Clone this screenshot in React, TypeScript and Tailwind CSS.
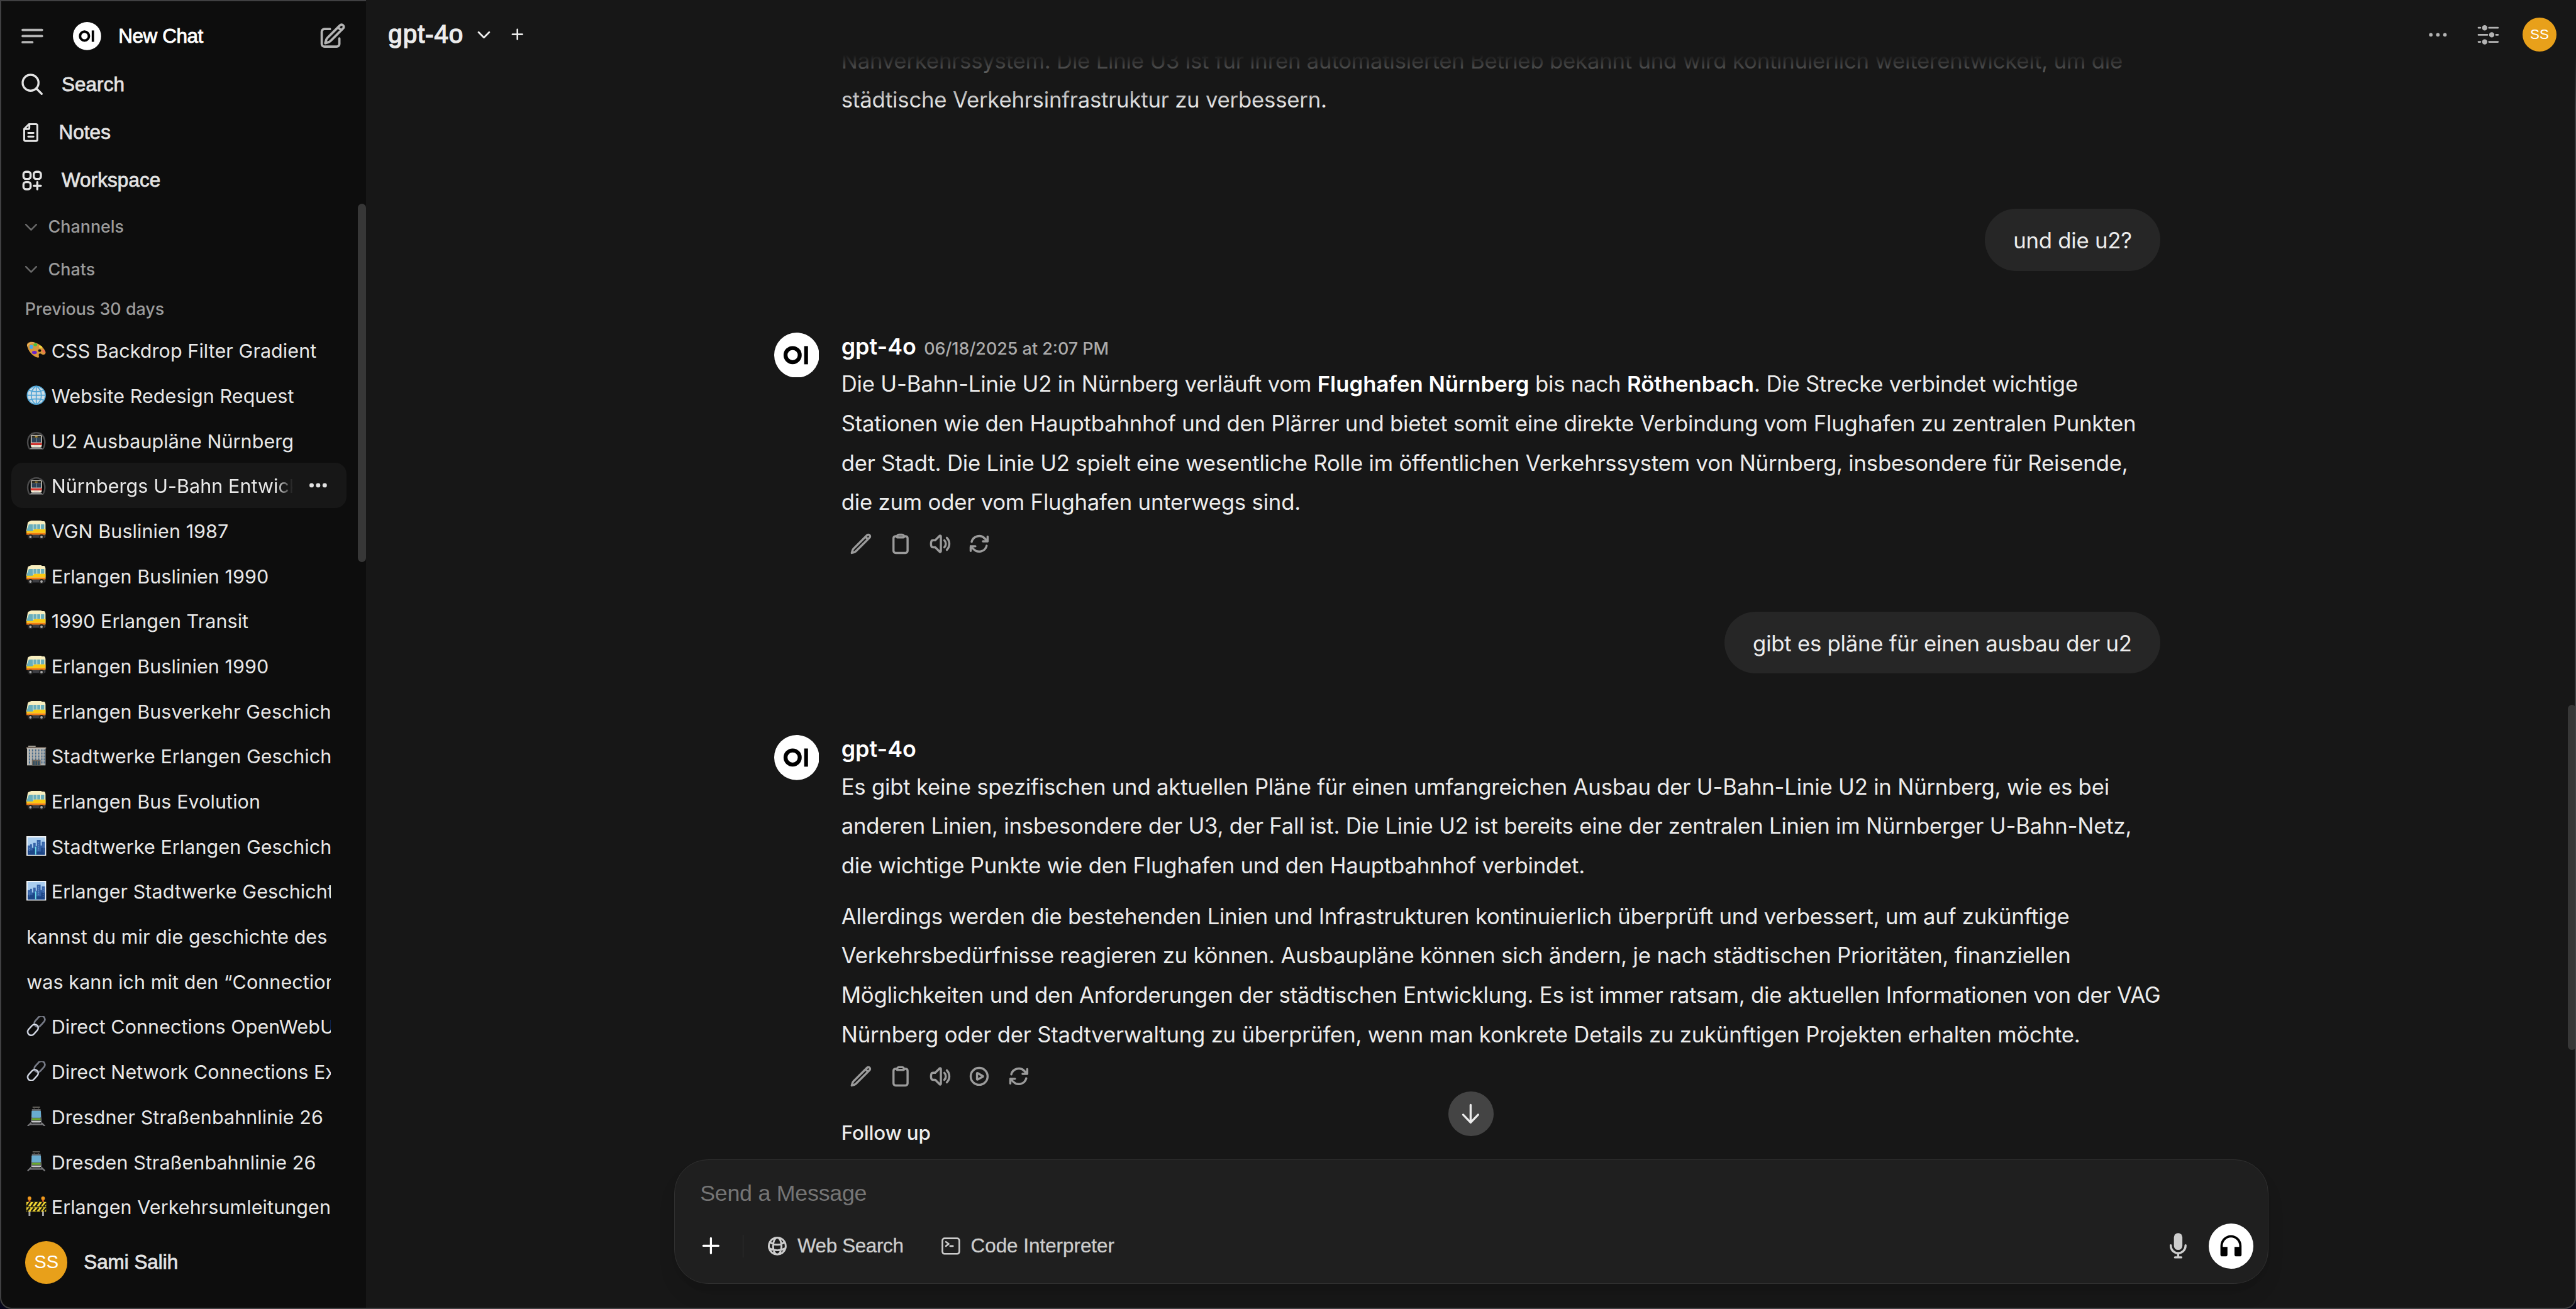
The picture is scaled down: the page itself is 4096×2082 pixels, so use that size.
import type { ReactNode } from 'react';
import clsx from 'clsx';

const GROTESK = "font-['Liberation_Sans',Arial,sans-serif]";

interface IconProps {
  d: string | string[];
  className?: string;
  strokeWidth?: number;
}

function Icon({ d, className = 'size-4', strokeWidth = 2 }: IconProps) {
  const paths = Array.isArray(d) ? d : [d];
  return (
    <svg
      viewBox="0 0 24 24"
      fill="none"
      stroke="currentColor"
      strokeWidth={strokeWidth}
      strokeLinecap="round"
      strokeLinejoin="round"
      className={clsx('shrink-0', className)}
    >
      {paths.map((p) => (
        <path key={p} d={p} />
      ))}
    </svg>
  );
}

const icons = {
  menu: 'M3.75 6.75h16.5M3.75 12h16.5m-16.5 5.25H12',
  edit: 'm16.862 4.487 1.687-1.688a1.875 1.875 0 1 1 2.652 2.652L10.582 16.07a4.5 4.5 0 0 1-1.897 1.13L6 18l.8-2.685a4.5 4.5 0 0 1 1.13-1.897l8.932-8.931Zm0 0L19.5 7.125M18 14v4.75A2.25 2.25 0 0 1 15.75 21H5.25A2.25 2.25 0 0 1 3 18.75V8.25A2.25 2.25 0 0 1 5.25 6H10',
  search: 'm21 21-5.197-5.197m0 0A7.5 7.5 0 1 0 5.196 5.196a7.5 7.5 0 0 0 10.607 10.607Z',
  notes: [
    'M10 3h7.5A1.5 1.5 0 0 1 19 4.5v15a1.5 1.5 0 0 1-1.5 1.5h-11A1.5 1.5 0 0 1 5 19.5V8Z',
    'M10.5 3.5V7a1.2 1.2 0 0 1-1.2 1.2H5.5',
    'M9.3 12.4h5.6M9.3 16.2h5.6',
  ],
  workspace:
    'M13.5 16.875h3.375m0 0h3.375m-3.375 0V13.5m0 3.375v3.375M6 10.5h2.25a2.25 2.25 0 0 0 2.25-2.25V6a2.25 2.25 0 0 0-2.25-2.25H6A2.25 2.25 0 0 0 3.75 6v2.25A2.25 2.25 0 0 0 6 10.5Zm0 9.75h2.25A2.25 2.25 0 0 0 10.5 18v-2.25a2.25 2.25 0 0 0-2.25-2.25H6a2.25 2.25 0 0 0-2.25 2.25V18A2.25 2.25 0 0 0 6 20.25Zm9.75-9.75H18a2.25 2.25 0 0 0 2.25-2.25V6A2.25 2.25 0 0 0 18 3.75h-2.25A2.25 2.25 0 0 0 13.5 6v2.25a2.25 2.25 0 0 0 2.25 2.25Z',
  chevron: 'm19.5 8.25-7.5 7.5-7.5-7.5',
  plus: 'M12 6v12m6-6H6',
  pencil:
    'M16.862 4.487l1.687-1.688a1.875 1.875 0 112.652 2.652L6.832 19.82a4.5 4.5 0 01-1.897 1.13l-2.685.8.8-2.685a4.5 4.5 0 011.13-1.897L16.863 4.487zm0 0L19.5 7.125',
  clipboard:
    'M15.666 3.888A2.25 2.25 0 0013.5 2.25h-3c-1.03 0-1.9.693-2.166 1.638m7.332 0c.055.194.084.4.084.612v0a.75.75 0 01-.75.75H9a.75.75 0 01-.75-.75v0c0-.212.03-.418.084-.612m7.332 0c.646.049 1.288.11 1.927.184 1.1.128 1.907 1.077 1.907 2.185V19.5a2.25 2.25 0 01-2.25 2.25H6.75A2.25 2.25 0 014.5 19.5V6.257c0-1.108.806-2.057 1.907-2.185a48.208 48.208 0 011.927-.184',
  speaker:
    'M19.114 5.636a9 9 0 010 12.728M16.463 8.288a5.25 5.25 0 010 7.424M6.75 8.25l4.72-4.72a.75.75 0 011.28.53v15.88a.75.75 0 01-1.28.53l-4.72-4.72H4.51c-.88 0-1.704-.507-1.938-1.354A9.01 9.01 0 012.25 12c0-.83.112-1.633.322-2.396C2.806 8.756 3.63 8.25 4.51 8.25H6.75z',
  play: [
    'M21 12a9 9 0 1 1-18 0 9 9 0 0 1 18 0Z',
    'M15.91 11.672a.375.375 0 0 1 0 .656l-5.603 3.113a.375.375 0 0 1-.557-.328V8.887c0-.286.307-.466.557-.327l5.603 3.112Z',
  ],
  refresh:
    'M16.023 9.348h4.992v-.001M2.985 19.644v-4.992m0 0h4.992m-4.993 0l3.181 3.183a8.25 8.25 0 0013.803-3.7M4.031 9.865a8.25 8.25 0 0113.803-3.7l3.181 3.182m0-4.991v4.99',
  globe:
    'M12 21a9.004 9.004 0 0 0 8.716-6.747M12 21a9.004 9.004 0 0 1-8.716-6.747M12 21c2.485 0 4.5-4.03 4.5-9S14.485 3 12 3m0 18c-2.485 0-4.5-4.03-4.5-9S9.515 3 12 3m0 0a8.997 8.997 0 0 1 7.843 4.582M12 3a8.997 8.997 0 0 0-7.843 4.582m15.686 0A11.953 11.953 0 0 1 12 10.5c-2.998 0-5.74-1.1-7.843-2.918m15.686 0A8.959 8.959 0 0 1 21 12c0 .778-.099 1.533-.284 2.253m0 0A17.919 17.919 0 0 1 12 16.5c-3.162 0-6.133-.815-8.716-2.247m0 0A9.015 9.015 0 0 1 3 12c0-1.605.42-3.113 1.157-4.418',
  code: 'm6.75 7.5 3 2.25-3 2.25m4.5 0h3m-9 8.25h13.5A2.25 2.25 0 0 0 21 18V6a2.25 2.25 0 0 0-2.25-2.25H5.25A2.25 2.25 0 0 0 3 6v12a2.25 2.25 0 0 0 2.25 2.25Z',
};

function Logo({ className }: { className: string }) {
  return (
    <svg viewBox="0 0 32 32" className={clsx('shrink-0', className)}>
      <circle cx="16" cy="16" r="16" fill="#fff" />
      <circle cx="13.1" cy="16" r="5.05" fill="none" stroke="#000" strokeWidth="2.8" />
      <rect x="21.3" y="9.6" width="2.7" height="12.9" fill="#000" />
    </svg>
  );
}

type EmojiName = 'palette' | 'globe' | 'metro' | 'bus' | 'office' | 'city' | 'link' | 'tram' | 'barrier';

const emojis: Record<EmojiName, ReactNode> = {
  palette: (
    <>
      <path d="M1 9C0 4 7 1 14 4c8 2 15 9 17 15 1 4-3 6-6 4-2-2-5-2-5 1 0 2 1 3 0 4-3 1-9-2-13-7C4 18 2 13 1 9Z" fill="#d8963a" />
      <path d="M2 10C2 6 8 3 14 5" stroke="#f0bd68" strokeWidth="1.4" fill="none" />
      <ellipse cx="21.5" cy="17" rx="2.4" ry="2.2" fill="#151008" />
      <ellipse cx="8" cy="11" rx="3" ry="3.4" fill="#4aa8e8" />
      <ellipse cx="14.5" cy="7.5" rx="3" ry="2.4" fill="#4cbf3c" />
      <ellipse cx="23" cy="11" rx="3" ry="2" fill="#f2d53c" transform="rotate(30 23 11)" />
      <ellipse cx="28" cy="18" rx="2.8" ry="1.8" fill="#ef6a50" transform="rotate(50 28 18)" />
      <ellipse cx="13" cy="20" rx="4" ry="2.6" fill="#6a24c8" />
    </>
  ),
  globe: (
    <>
      <circle cx="16" cy="16" r="15.5" fill="#56a9d8" />
      <circle cx="16" cy="16" r="13.8" fill="#cfdfe8" />
      <path
        d="M16 1v30M1 16h30M4 8c7 3 17 3 24 0M4 24c7-3 17-3 24 0M16 1C5 8 5 24 16 31M16 1c11 7 11 23 0 30"
        fill="none"
        stroke="#4fa4d6"
        strokeWidth="1.7"
      />
    </>
  ),
  metro: (
    <>
      <path d="M4 31C-3 19 2 3 16 3s19 16 12 28Z" fill="#4a4a4b" />
      <path d="M6.500 31C0 20 4 5.500 16 5.500S32 20 25.500 31Z" fill="#070707" />
      <path d="M5 31l3-3h16l3 3Z" fill="#8d8d8d" />
      <rect x="7" y="8" width="18" height="20" rx="2.5" fill="#e5e0d4" />
      <rect x="8.5" y="9" width="15" height="4" fill="#2b2a22" />
      <path d="M14 11h4" stroke="#e5b83c" strokeWidth="1.4" />
      <rect x="8.500" y="13" width="15" height="7" fill="#2c4054" />
      <path d="M16 13v7" stroke="#8ea3b5" />
      <rect x="7" y="21" width="18" height="3.5" fill="#d13430" />
      <path d="M9 26h3M20 26h3" stroke="#fff6c8" strokeWidth="1.8" />
    </>
  ),
  bus: (
    <>
      <rect x="2" y="22" width="29" height="6" rx="1.5" fill="#3c3d42" />
      <path d="M3 2 8 0h16l1 1h4q2 1 2 4v17H0v-6L2 4Z" fill="#f8efbf" />
      <path d="M4 6h25v8H12l-2 4H1v-4Z" fill="#69aebb" />
      <path d="M11 6v9M17 6v8M23 6v8" stroke="#e6f0dc" strokeWidth="1.1" />
      <path d="M0 17h10l3-3h18v6H0Z" fill="#fac912" />
      <path d="M0 20h31v3H0Z" fill="#f07b12" />
      <circle cx="6.5" cy="26.5" r="4" fill="#222" />
      <circle cx="6.5" cy="26.5" r="2" fill="#aaa" />
      <circle cx="24.5" cy="26.5" r="4" fill="#222" />
      <circle cx="24.5" cy="26.5" r="2" fill="#aaa" />
    </>
  ),
  office: (
    <>
      <rect x="3" y="0" width="12" height="4" fill="#a29d92" />
      <rect x="0" y="2" width="32" height="3" fill="#6b6058" />
      <rect x="1" y="4" width="30" height="28" fill="#b7b6b1" />
      <path d="M5 6v25M10 6v25M15 6v25M20 6v25M25 6v25M29 6v25" stroke="#46698a" strokeWidth="2" strokeDasharray="3.4 1.5" />
      <rect x="9" y="23" width="14" height="9" fill="#6f675d" />
      <path d="M12 25v7M16 25v7M20 25v7" stroke="#2c4d63" strokeWidth="2.4" />
    </>
  ),
  city: (
    <>
      <rect width="32" height="32" fill="#f1f4f6" />
      <rect x="2" y="2" width="28" height="28" fill="#a9cdf0" />
      <path d="M2 15h4v-2h3v6h2v-8h4v5h2V6h6v9h2V9h5v21H2Z" fill="#3563a8" />
      <path d="M2 23h8v-3h6v5h8v-6h6v11H2Z" fill="#1c4586" />
      <path d="M15 17v13" stroke="#6fe0ec" strokeWidth="1.8" />
      <path d="M5 19v7M20 9v14M27 12v14" stroke="#86a9dc" strokeDasharray="1.6 1.6" />
    </>
  ),
  link: (
    <>
      <rect x="12" y="3.2" width="20" height="11.4" rx="5.7" fill="none" stroke="#767a86" strokeWidth="2.8" transform="rotate(-48 21.5 9.5)" />
      <rect x="0.6" y="16.8" width="20" height="11.4" rx="5.7" fill="none" stroke="#9fa6b6" strokeWidth="2.8" transform="rotate(-48 10.5 22.5)" />
      <rect x="0.6" y="16.8" width="20" height="11.4" rx="5.7" fill="none" stroke="#eef1f7" strokeWidth="1.1" transform="rotate(-48 10.5 22.5)" />
    </>
  ),
  tram: (
    <>
      <path d="M10 1h12M12 3.5l2 2h4l2-2" stroke="#77746e" strokeWidth="1.4" fill="none" />
      <path d="M8 26 2 32M24 26l6 6M5 29h22" stroke="#77777a" strokeWidth="2.4" />
      <path d="M9 4h14l2 19-3 4H10l-3-4Z" fill="#5f6062" />
      <rect x="8.5" y="7" width="15" height="11" rx="1.5" fill="#69acd0" />
      <path d="M9 19h14v3H9Z" fill="#69a92e" />
      <path d="M8 24.5h16" stroke="#c9c9cb" strokeWidth="2" />
    </>
  ),
  barrier: (
    <>
      <path d="M5 20v12M27 20v12" stroke="#a4a4a6" strokeWidth="3" />
      <circle cx="5" cy="3" r="3" fill="#f09a1d" />
      <circle cx="27" cy="3" r="3" fill="#f09a1d" />
      <path d="M3.5 5h3v4h-3ZM25.5 5h3v4h-3Z" fill="#d4571c" />
      <path d="M0 9h32v7H0ZM0 17.5h32v7H0Z" fill="#f0d632" />
      <path
        d="M1 16 6 9M8 16l5-7M15 16l5-7M22 16l5-7M28 16l4-5M1 24l5-6M8 24l5-6M15 24l5-6M22 24l5-6M28 24l4-5"
        stroke="#1d1b12"
        strokeWidth="2.6"
      />
    </>
  ),
};

function Emoji({ name }: { name: EmojiName }) {
  return (
    <svg viewBox="0 0 32 32" className="mr-[3.6px] size-3.5 shrink-0">
      {emojis[name]}
    </svg>
  );
}

const chats: { emoji?: EmojiName; title: string; active?: boolean }[] = [
  { emoji: 'palette', title: 'CSS Backdrop Filter Gradient' },
  { emoji: 'globe', title: 'Website Redesign Request' },
  { emoji: 'metro', title: 'U2 Ausbaupläne Nürnberg' },
  { emoji: 'metro', title: 'Nürnbergs U-Bahn Entwicklung', active: true },
  { emoji: 'bus', title: 'VGN Buslinien 1987' },
  { emoji: 'bus', title: 'Erlangen Buslinien 1990' },
  { emoji: 'bus', title: '1990 Erlangen Transit' },
  { emoji: 'bus', title: 'Erlangen Buslinien 1990' },
  { emoji: 'bus', title: 'Erlangen Busverkehr Geschichte' },
  { emoji: 'office', title: 'Stadtwerke Erlangen Geschichte' },
  { emoji: 'bus', title: 'Erlangen Bus Evolution' },
  { emoji: 'city', title: 'Stadtwerke Erlangen Geschichte' },
  { emoji: 'city', title: 'Erlanger Stadtwerke Geschichte' },
  { title: 'kannst du mir die geschichte des' },
  { title: 'was kann ich mit den “Connections”' },
  { emoji: 'link', title: 'Direct Connections OpenWebUI' },
  { emoji: 'link', title: 'Direct Network Connections Explained' },
  { emoji: 'tram', title: 'Dresdner Straßenbahnlinie 26' },
  { emoji: 'tram', title: 'Dresden Straßenbahnlinie 26' },
  { emoji: 'barrier', title: 'Erlangen Verkehrsumleitungen' },
];

function Sidebar() {
  const navText = clsx(GROTESK, 'text-sm leading-5 text-[#e3e3e3] [-webkit-text-stroke:0.35px]');
  return (
    <aside className="relative flex h-full w-[260px] shrink-0 flex-col bg-[#0d0d0d]">
      <div className="flex h-[43px] items-center pt-[8.3px] pr-[14.1px] pl-[12.9px] text-[#b4b4b4]">
        <Icon d={icons.menu} className="size-5" />
        <Logo className="ml-[18.9px] size-5" />
        <span className={clsx(GROTESK, 'ml-[12.2px] flex-1 pt-[0.6px] text-sm leading-5 tracking-[-0.16px] text-white [-webkit-text-stroke:0.4px]')}>
          New Chat
        </span>
        <Icon d={icons.edit} className="size-5" />
      </div>
      {[
        { label: 'Search', icon: icons.search, size: 'size-[18px]' },
        { label: 'Notes', icon: icons.notes, size: 'size-4' },
        { label: 'Workspace', icon: icons.workspace, size: 'size-[18px]' },
      ].map((item) => (
        <div key={item.label} className="flex h-[34px] items-center gap-[12px] pl-[13.7px] text-[#e3e3e3]">
          <Icon d={item.icon} className={item.size} />
          <span className={clsx(navText, 'pt-[0.6px] tracking-[0.06px]')}>{item.label}</span>
        </div>
      ))}
      <div className="pt-[1.3px]">
        {['Channels', 'Chats'].map((label) => (
          <div key={label} className="flex h-[30px] items-center gap-[6.2px] pl-4">
            <Icon d={icons.chevron} strokeWidth={2.2} className="size-3 text-[#6b6b6b]" />
            <span className="text-xs font-medium text-[#9b9b9b]">{label}</span>
          </div>
        ))}
      </div>
      <div className="flex h-[26.3px] items-center pl-[17.8px] text-xs font-medium text-[#9b9b9b]">Previous 30 days</div>
      <div className="flex flex-col pr-3.5 pl-2">
        {chats.map((chat, i) => (
          <div
            key={i}
            className={clsx(
              'flex h-8 items-center rounded-lg pl-[10.9px]',
              chat.active ? 'bg-[#171717] pr-[14px]' : 'pr-[11px]',
            )}
          >
            {chat.emoji && <Emoji name={chat.emoji} />}
            <span
              className={clsx(
                'h-[22px] flex-1 overflow-hidden pt-px text-[13.6px] leading-[21.4px] tracking-[0.04px] whitespace-nowrap text-[#e8e8e8]',
                chat.active && 'mr-[11.5px] [mask-image:linear-gradient(to_right,black_93%,transparent)]',
              )}
            >
              {chat.title}
            </span>
            {chat.active && (
              <svg viewBox="0 0 16 16" className="size-[12.4px] shrink-0 overflow-visible text-[#e3e3e3]" fill="currentColor">
                <circle cx="2" cy="8" r="2" />
                <circle cx="8" cy="8" r="2" />
                <circle cx="14" cy="8" r="2" />
              </svg>
            )}
          </div>
        ))}
      </div>
      <div className="flex items-center gap-[11.6px] pt-[8.9px] pl-[17.9px]">
        <div className={clsx(GROTESK, 'flex size-[30px] items-center justify-center rounded-full bg-[#e8a01a] text-[13px] text-white')}>
          SS
        </div>
        <span className={clsx(navText, 'pt-[0.6px]')}>Sami Salih</span>
      </div>
      <div className="absolute top-[144.6px] right-0 h-[254.7px] w-1.5 rounded-full bg-[#373737]" />
    </aside>
  );
}

function Header() {
  return (
    <header className="absolute inset-x-0 top-0 z-10 flex h-[78px] items-start bg-linear-to-b from-[#171717] via-[#171717] via-50% to-transparent to-97% pt-[8.6px]">
      <div className="flex h-8 flex-1 items-center pl-[15.6px] text-[#ececec]">
        <span className={clsx(GROTESK, 'text-lg leading-8 tracking-[0.4px] [-webkit-text-stroke:0.65px]')}>gpt-4o</span>
        <Icon d={icons.chevron} strokeWidth={2.5} className="ml-[8.6px] size-3" />
        <Icon d={icons.plus} className="ml-[10.6px] size-3.5" />
      </div>
      <div className="flex h-8 items-center pr-[13.9px] text-[#b4b4b4]">
        <svg viewBox="0 0 24 24" fill="currentColor" className="size-5">
          <circle cx="6" cy="12" r="1.5" />
          <circle cx="12" cy="12" r="1.5" />
          <circle cx="18" cy="12" r="1.5" />
        </svg>
        <svg viewBox="0 0 24 24" fill="currentColor" className="ml-[15.7px] size-5">
          <path d="M18.75 12.75h1.5a.75.75 0 0 0 0-1.5h-1.5a.75.75 0 0 0 0 1.5ZM12 6a.75.75 0 0 1 .75-.75h7.5a.75.75 0 0 1 0 1.5h-7.5A.75.75 0 0 1 12 6ZM12 18a.75.75 0 0 1 .75-.75h7.5a.75.75 0 0 1 0 1.5h-7.5A.75.75 0 0 1 12 18ZM3.75 6.75h1.5a.75.75 0 1 0 0-1.5h-1.5a.75.75 0 0 0 0 1.5ZM5.25 18.75h-1.5a.75.75 0 0 1 0-1.5h1.5a.75.75 0 0 1 0 1.5ZM3 12a.75.75 0 0 1 .75-.75h7.5a.75.75 0 0 1 0 1.5h-7.5A.75.75 0 0 1 3 12ZM9 3.75a2.25 2.25 0 1 0 0 4.5 2.25 2.25 0 0 0 0-4.5ZM12.75 12a2.25 2.25 0 1 1 4.5 0 2.25 2.25 0 0 1-4.5 0ZM9 15.75a2.25 2.25 0 1 0 0 4.5 2.25 2.25 0 0 0 0-4.5Z" />
        </svg>
        <div className={clsx(GROTESK, 'ml-[14.4px] flex size-6 items-center justify-center rounded-full bg-[#e8a01a] text-[10px] text-white')}>
          SS
        </div>
      </div>
    </header>
  );
}

function Lines({ lines }: { lines: ReactNode[] }) {
  return (
    <p className="translate-y-[0.5px] text-[15.5px] leading-7 tracking-[-0.095px] whitespace-nowrap">
      {lines.map((line, i) => (
        <span key={i} className="block">
          {line}
        </span>
      ))}
    </p>
  );
}

function Bold({ children }: { children: ReactNode }) {
  return <strong className="font-semibold tracking-normal text-white">{children}</strong>;
}

function UserMessage({ children }: { children: ReactNode }) {
  return (
    <div className="flex justify-end">
      <div className="flex h-11 items-center rounded-3xl bg-[#262626] px-5 pt-[0.5px] text-[15.5px] tracking-[-0.11px] whitespace-nowrap">
        {children}
      </div>
    </div>
  );
}

interface BotMessageProps {
  date?: string;
  actions: (string | string[])[];
  children: ReactNode;
}

function BotMessage({ date, actions, children }: BotMessageProps) {
  return (
    <div className="mt-[43.7px] flex">
      <Logo className="size-8" />
      <div className="ml-[15.8px] flex-1">
        <div className="flex h-[22.1px] items-baseline gap-[5.5px]">
          <span className="text-base leading-[20.2px] font-semibold text-white">gpt-4o</span>
          {date && <span className="text-xs leading-[14px] font-medium text-[#ababab]">{date}</span>}
        </div>
        {children}
        <div className="mt-0.5 flex text-[#9b9b9b]">
          {actions.map((d, i) => (
            <div key={i} className="flex size-7 items-center justify-center">
              <Icon d={d} strokeWidth={2.3} />
            </div>
          ))}
        </div>
      </div>
    </div>
  );
}

function Composer() {
  const toolText = clsx(GROTESK, 'pt-[0.8px] text-sm leading-5 text-[#cdcdcd] [-webkit-text-stroke:0.15px]');
  return (
    <div className="flex shrink-0 pb-[18px] pl-[218.6px]">
      <div className="relative flex h-[88.4px] w-[1131.8px] flex-col rounded-3xl border-[0.7px] border-[#303030] bg-[#1f1f1f] shadow-lg">
        <div className={clsx(GROTESK, 'pt-[12.3px] pl-[17.9px] text-base leading-6 tracking-[-0.12px] text-[#757575]')}>Send a Message</div>
        <div className="mt-[8.9px] flex h-8 items-center pr-[10.2px] pl-[15.7px] text-[#cdcdcd]">
          <Icon d="M12 5.6v12.8m6.4-6.4H5.6" strokeWidth={1.75} className="size-5 text-white" />
          <div className="ml-[12.3px] h-4 w-[0.7px] bg-[#303030]" />
          <Icon d={icons.globe} className="ml-[16px] size-4" />
          <span className={clsx(toolText, 'ml-[6.3px] w-[101.1px] tracking-[-0.15px]')}>Web Search</span>
          <Icon d={icons.code} strokeWidth={1.75} className="size-4" />
          <span className={clsx(toolText, 'ml-[6px] flex-1')}>Code Interpreter</span>
          <svg viewBox="0 0 20 20" fill="currentColor" className="size-5">
            <path d="M7 4a3 3 0 016 0v6a3 3 0 11-6 0V4z" />
            <path d="M5.5 9.643a.75.75 0 00-1.5 0V10c0 3.06 2.29 5.585 5.25 5.954V17.5h-1.5a.75.75 0 000 1.5h4.5a.75.75 0 000-1.5h-1.5v-1.546A6.001 6.001 0 0016 10v-.357a.75.75 0 00-1.5 0V10a4.5 4.5 0 01-9 0v-.357z" />
          </svg>
          <div className="ml-[11.8px] flex size-8 items-center justify-center rounded-full bg-white text-black">
            <svg viewBox="0 0 24 24" fill="currentColor" className="size-5">
              <path d="M5 13H9V19.5Q9 21 7.5 21H4.5Q3 21 3 19.5V12a9 9 0 0 1 18 0v7.5q0 1.5-1.5 1.5h-3q-1.5 0-1.5-1.5V13h4v-1a7 7 0 0 0-14 0Z" />
            </svg>
          </div>
        </div>
        <div className="absolute -top-[48.6px] left-[549.1px] flex size-8 items-center justify-center rounded-full bg-[#444] text-[#ececec]">
          <svg viewBox="0 0 20 20" fill="currentColor" className="size-5">
            <path d="M10 3a.75.75 0 01.75.75v10.638l3.96-4.158a.75.75 0 111.08 1.04l-5.25 5.5a.75.75 0 01-1.08 0l-5.25-5.5a.75.75 0 111.08-1.04l3.96 4.158V3.75A.75.75 0 0110 3z" />
          </svg>
        </div>
      </div>
    </div>
  );
}

export default function App() {
  return (
    <div className="relative h-[929.46px] w-[1828.57px] overflow-hidden bg-[#07071c] font-[Inter,sans-serif] [zoom:2.24]">
      <div className="flex h-full w-full overflow-hidden rounded-b-lg bg-[#171717]">
        <Sidebar />
        <main className="relative flex h-full min-w-0 flex-1 flex-col text-[#ececec]">
          <Header />
          <div className="min-h-0 flex-1 overflow-hidden pt-[28.4px] pl-[289.4px]">
            <div className="w-[983.9px]">
              <div className="mb-[63.9px] pl-[47.8px]">
                <Lines
                  lines={[
                    'Nahverkehrssystem. Die Linie U3 ist für ihren automatisierten Betrieb bekannt und wird kontinuierlich weiterentwickelt, um die',
                    'städtische Verkehrsinfrastruktur zu verbessern.',
                  ]}
                />
              </div>
              <UserMessage>und die u2?</UserMessage>
              <BotMessage date="06/18/2025 at 2:07 PM" actions={[icons.pencil, icons.clipboard, icons.speaker, icons.refresh]}>
                <Lines
                  lines={[
                    <>
                      Die U-Bahn-Linie U2 in Nürnberg verläuft vom <Bold>Flughafen Nürnberg</Bold> bis nach <Bold>Röthenbach</Bold>. Die
                      Strecke verbindet wichtige
                    </>,
                    'Stationen wie den Hauptbahnhof und den Plärrer und bietet somit eine direkte Verbindung vom Flughafen zu zentralen Punkten',
                    'der Stadt. Die Linie U2 spielt eine wesentliche Rolle im öffentlichen Verkehrssystem von Nürnberg, insbesondere für Reisende,',
                    'die zum oder vom Flughafen unterwegs sind.',
                  ]}
                />
              </BotMessage>
              <div className="mt-[34.2px]">
                <UserMessage>gibt es pläne für einen ausbau der u2</UserMessage>
              </div>
              <BotMessage actions={[icons.pencil, icons.clipboard, icons.speaker, icons.play, icons.refresh]}>
                <div className="flex flex-col gap-2">
                  <Lines
                    lines={[
                      'Es gibt keine spezifischen und aktuellen Pläne für einen umfangreichen Ausbau der U-Bahn-Linie U2 in Nürnberg, wie es bei',
                      'anderen Linien, insbesondere der U3, der Fall ist. Die Linie U2 ist bereits eine der zentralen Linien im Nürnberger U-Bahn-Netz,',
                      'die wichtige Punkte wie den Flughafen und den Hauptbahnhof verbindet.',
                    ]}
                  />
                  <Lines
                    lines={[
                      'Allerdings werden die bestehenden Linien und Infrastrukturen kontinuierlich überprüft und verbessert, um auf zukünftige',
                      'Verkehrsbedürfnisse reagieren zu können. Ausbaupläne können sich ändern, je nach städtischen Prioritäten, finanziellen',
                      'Möglichkeiten und den Anforderungen der städtischen Entwicklung. Es ist immer ratsam, die aktuellen Informationen von der VAG',
                      'Nürnberg oder der Stadtverwaltung zu überprüfen, wenn man konkrete Details zu zukünftigen Projekten erhalten möchte.',
                    ]}
                  />
                </div>
              </BotMessage>
              <div className="mt-4 pt-[0.5px] pl-[47.8px] text-sm leading-5 font-medium tracking-[-0.05px]">Follow up</div>
            </div>
          </div>
          <Composer />
          <div className="absolute top-[500.3px] right-0 h-[245.1px] w-1.5 rounded-full bg-[#373737]" />
        </main>
      </div>
      <div className="pointer-events-none absolute inset-0 rounded-b-lg border-[0.9px] border-[#404042]" />
    </div>
  );
}
